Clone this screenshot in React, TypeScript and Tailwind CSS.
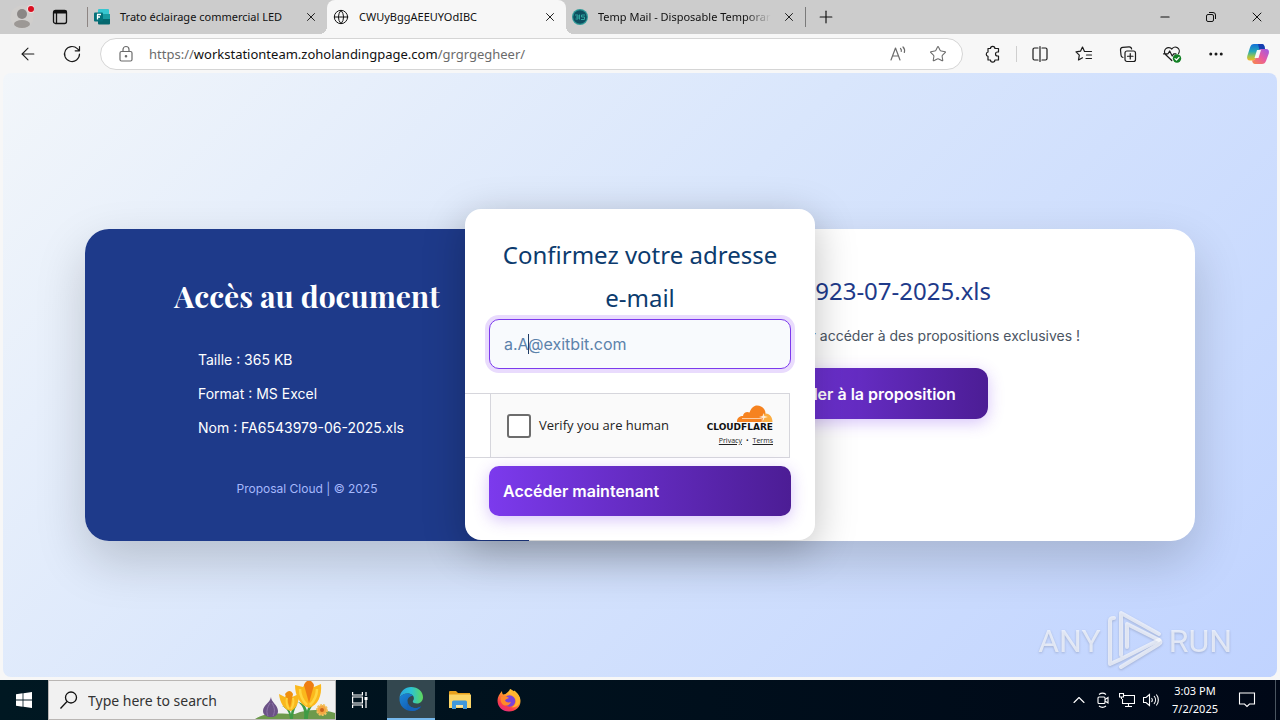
import { useState } from 'react';
import type { ReactNode } from 'react';
import { ArrowLeft, Globe, Minus, Plus, X, ChevronUp, Star, Ellipsis } from 'lucide-react';

function FormsIcon() {
    return (
        <svg viewBox="0 0 16 16" className="w-4 h-4 shrink-0">
            <path d="M5 0h9a1 1 0 0 1 1 1v4H4V1a1 1 0 0 1 1-1z" fill="#37c6d0" />
            <path d="M4 5h12v5H4z" fill="#1a9ba1" />
            <path d="M4 10h12v4.500a1 1 0 0 1-1 1H5a1 1 0 0 1-1-1z" fill="#05686f" />
            <rect x="0" y="3.500" width="9" height="9" rx="1" fill="#04717a" />
            <path d="M3 5.500h4M3 8h3M3.500 5.500v5" stroke="#fff" strokeWidth="1.300" fill="none" />
        </svg>
    );
}

function TempMailIcon() {
    return (
        <svg viewBox="0 0 16 16" className="w-4 h-4 shrink-0">
            <circle cx="8" cy="8" r="8" fill="#2f9a98" />
            <circle cx="8" cy="8" r="6.800" fill="#0d4f60" />
            <path d="M3 6h3v4H3.500M6 8H4M7.500 5.500v5M13 6H9.500v2h3v2.500H9" stroke="#2fa7a0" fill="none" />
        </svg>
    );
}

function ProfileIcon() {
    return (
        <svg viewBox="0 0 24 24" className="w-6 h-6">
            <circle cx="12" cy="12" r="11.500" fill="#d0cecc" />
            <circle cx="12" cy="9" r="5" fill="#8b8785" />
            <ellipse cx="12" cy="19" rx="8" ry="4" fill="#9c9895" />
            <circle cx="21" cy="4" r="4" fill="#f3dcdc" />
            <circle cx="21" cy="4" r="3" fill="#d90f20" />
        </svg>
    );
}

function CopilotIcon() {
    return (
        <svg viewBox="0 0 24 24" className="w-6 h-6">
            <defs>
                <linearGradient id="cpA" x1="0" y1="0" x2="0" y2="1">
                    <stop offset="0" stopColor="#1470d8" />
                    <stop offset=".45" stopColor="#25a8b8" />
                    <stop offset=".75" stopColor="#9ac64c" />
                    <stop offset="1" stopColor="#f5b62a" />
                </linearGradient>
                <linearGradient id="cpB" x1="1" y1="0" x2="0" y2="1">
                    <stop offset="0" stopColor="#9a5be8" />
                    <stop offset=".5" stopColor="#e85aa0" />
                    <stop offset="1" stopColor="#f98a45" />
                </linearGradient>
            </defs>
            <path d="M8 2h8c1.500 0 2 1 2.500 2.500L19 7h-3c-2 0-3 1-3.500 2.500L10 16c-.6 1.600-1.500 2.500-3.500 2.500H4c-2.500 0-3.400-2-2.700-4.500l2.700-8.500C4.700 3 6 2 8 2z" fill="url(#cpA)" />
            <path d="M12 2h4c1.500 0 2 1 2.500 2.500L19 7h-3c-1 0-2 .3-2.500 1z" fill="#173eb0" />
            <path d="M16 22H9c-1.500 0-2.300-1-2.700-2.500L6 18.500c2 0 3.200-.8 3.800-2.500l2.300-6.500C12.700 7.800 13.800 7 16 7h4c2.500 0 3.500 2 2.800 4.500l-2.600 7C19.400 21 18 22 16 22z" fill="url(#cpB)" />
            <path d="M11 8h4l-2.500 8H8.500z" fill="#f7f7f7" />
        </svg>
    );
}

function ToolIcon({ children }: { children: ReactNode }) {
    return (
        <svg viewBox="0 0 20 20" className="w-5 h-5" fill="none" stroke="currentColor" strokeWidth="1.200" strokeLinejoin="round" strokeLinecap="round">
            {children}
        </svg>
    );
}

function ToolButton({ label, children }: { label: string; children: ReactNode }) {
    return (
        <button aria-label={label} className="w-11 h-8 flex items-center justify-center text-[#1b1b1b]">
            {children}
        </button>
    );
}

interface TabProps {
    title: string;
    icon: ReactNode;
    active?: boolean;
    faded?: boolean;
}

function Tab({ title, icon, active, faded }: TabProps) {
    return (
        <div className={`relative w-[239px] h-full flex items-center pl-1.5 pr-2 ${active ? 'bg-[#f7f7f7] rounded-t-lg' : ''}`}>
            {active && (
                <>
                    <span className="absolute -left-2 bottom-0 w-2 h-2 bg-[radial-gradient(circle_at_0_0,#cccccc_8px,#f7f7f7_8px)]" />
                    <span className="absolute -right-2 bottom-0 w-2 h-2 bg-[radial-gradient(circle_at_100%_0,#cccccc_8px,#f7f7f7_8px)]" />
                </>
            )}
            {icon}
            <span className={`ml-2.5 text-[11px] whitespace-nowrap ${faded ? 'mask-r-from-85%' : ''}`}>{title}</span>
            <button aria-label="Close tab" className="ml-auto w-4 h-4 flex items-center justify-center">
                <X className="w-3.5 h-3.5" strokeWidth={1.6} />
            </button>
        </div>
    );
}

function TabStrip() {
    return (
        <div className="h-[34px] shrink-0 flex items-center bg-[#cccccc] text-[#111]">
            <button aria-label="Profile" className="w-11 flex justify-center"><ProfileIcon /></button>
            <button aria-label="Tab actions" className="w-8 flex justify-center">
                <svg viewBox="0 0 16 16" className="w-4 h-4" fill="none" stroke="#111" strokeWidth="1.300">
                    <rect x="1.500" y="1.500" width="13" height="13" rx="2" />
                    <path d="M1.500 3h13" strokeWidth="3" />
                    <path d="M4.500 4v10" />
                </svg>
            </button>
            <span className="w-px h-5 ml-[11px] bg-[#8d8583]" />
            <Tab title="Trato éclairage commercial LED" icon={<FormsIcon />} />
            <Tab title="CWUyBggAEEUYOdIBC" icon={<Globe className="w-4 h-4 shrink-0" strokeWidth={1.5} />} active />
            <Tab title="Temp Mail - Disposable Temporar" icon={<TempMailIcon />} faded />
            <span className="w-px h-5 bg-[#7a7a7a]" />
            <button aria-label="New tab" className="w-10 flex justify-center"><Plus className="w-5 h-5" strokeWidth={1.4} /></button>
            <div className="ml-auto flex items-center">
                <button aria-label="Minimize" className="w-[46px] flex justify-center"><Minus className="w-3.5 h-3.5" strokeWidth={2} /></button>
                <button aria-label="Restore" className="w-[46px] flex justify-center">
                    <svg viewBox="0 0 12 12" className="w-3 h-3" fill="none" stroke="#111">
                        <rect x="1.500" y="3.500" width="7" height="7" rx="1.500" />
                        <path d="M4 1.500h4a2.500 2.500 0 0 1 2.500 2.500v4" />
                    </svg>
                </button>
                <button aria-label="Close" className="w-[46px] flex justify-center"><X className="w-4 h-4" strokeWidth={1.5} /></button>
            </div>
        </div>
    );
}

function Toolbar() {
    return (
        <div className="h-[39px] shrink-0 flex items-center pl-1.5 pr-0.5 bg-[#f7f7f7]">
            <ToolButton label="Back"><ArrowLeft className="w-5 h-5" strokeWidth={1.3} /></ToolButton>
            <ToolButton label="Refresh">
                <ToolIcon>
                    <path d="M17.500 10a7.500 7.500 0 1 1-2.200-5.300l2 2M17.500 2.500v4.300h-4.300" />
                </ToolIcon>
            </ToolButton>
            <div className="ml-1.5 mr-2 flex-1 h-8 flex items-center pl-4 pr-3 rounded-full border border-[#d5d5d5] bg-white text-[#6b6b6b]">
                <svg viewBox="0 0 18 18" className="w-[18px] h-[18px] shrink-0" fill="none" stroke="currentColor" strokeWidth="1.200">
                    <rect x="3" y="6.500" width="12" height="9.500" rx="1.500" />
                    <path d="M6 6.500V4.500a3 3 0 0 1 6 0v2" />
                    <circle cx="9" cy="11.200" r=".7" fill="currentColor" />
                </svg>
                <span className="ml-3.5 flex-1 text-[13px] leading-5 whitespace-nowrap">
                    https://<span className="text-[#111]">workstationteam.zoholandingpage.com</span>/grgrgegheer/
                </span>
                <button aria-label="Read aloud" className="w-10 flex justify-center">
                    <ToolIcon>
                        <path d="M3 16l4.500-12L12 16M4.500 12h6M12.500 4.500c.8.800 1 2 .8 3M15 3c1.500 1.500 1.900 3.700 1.300 5.500" />
                    </ToolIcon>
                </button>
                <button aria-label="Favorite" className="w-10 -mr-2 flex justify-center"><Star className="w-[18px] h-[18px]" strokeWidth={1.4} /></button>
            </div>
            <ToolButton label="Extensions">
                <ToolIcon>
                    <path d="M5 4.500h2.500a2.200 2.200 0 0 1 4.400 0H15.500V8h-1a2 2 0 0 0 0 4h1v4h-3.600a2.200 2.200 0 0 1-4.400 0H5v-3.700a2.200 2.200 0 0 1 0-4.300z" />
                </ToolIcon>
            </ToolButton>
            <span className="w-px h-4 mx-px bg-[#cfcfcf]" />
            <ToolButton label="Split screen">
                <ToolIcon>
                    <path d="M8 4H4.500A1.500 1.500 0 0 0 3 5.500v9A1.500 1.500 0 0 0 4.500 16H8M12 4h3.500A1.500 1.500 0 0 1 17 5.500v9a1.500 1.500 0 0 1-1.500 1.500H12M10 2.500v15" />
                </ToolIcon>
            </ToolButton>
            <ToolButton label="Favorites">
                <ToolIcon>
                    <path d="M10.500 7.500L8.500 3 6.500 7.200 2 7.800l3.300 3.300-.8 4.900 4-2.200M10.500 7.500H17.500M12.500 11h5M12 14.500h5.500" />
                </ToolIcon>
            </ToolButton>
            <ToolButton label="Collections">
                <ToolIcon>
                    <path d="M5 13.500A2.500 2.500 0 0 1 3 11L2.500 6A2.500 2.500 0 0 1 4.700 3.400L11 2.800A2.500 2.500 0 0 1 13.600 5" />
                    <rect x="7" y="7" width="10.500" height="10.500" rx="2" />
                    <path d="M12.250 9.500v5.500M9.500 12.250h5.500" />
                </ToolIcon>
            </ToolButton>
            <ToolButton label="Browser essentials">
                <ToolIcon>
                    <path d="M9.800 16.500L3.500 10.500A4 4 0 0 1 9.800 5a4 4 0 0 1 6.800 4.500M1.500 9.800H6l1.700-2.800 2.500 5 1.500-2.200H14" />
                    <circle cx="15" cy="14.500" r="4.200" fill="#128024" stroke="none" />
                    <path d="M13 14.600l1.500 1.400 2.500-2.700" stroke="#fff" />
                </ToolIcon>
            </ToolButton>
            <ToolButton label="Settings and more"><Ellipsis className="w-[18px] h-[18px]" strokeWidth={2} /></ToolButton>
            <button aria-label="Copilot" className="w-10 flex justify-center"><CopilotIcon /></button>
        </div>
    );
}

function DocumentCard() {
    return (
        <div className="w-full max-w-[1110px] flex min-h-[312px] rounded-3xl overflow-hidden bg-white shadow-[0_20px_50px_rgba(0,0,0,0.18)]">
            <section className="w-2/5 flex flex-col items-center pt-12 pb-[42px] bg-[#1e3a8a] text-white">
                <h1 className="font-['Playfair_Display','Liberation_Serif',serif] text-[30px] leading-[38px] font-bold">Accès au document</h1>
                <ul className="mt-7 w-[218px] text-[14px] leading-[34px] whitespace-nowrap">
                    <li>Taille : 365 KB</li>
                    <li>Format : MS Excel</li>
                    <li>Nom : FA6543979-06-2025.xls</li>
                </ul>
                <p className="mt-auto text-[12px] leading-5 text-[#a5b8fc]">Proposal Cloud | © 2025</p>
            </section>
            <section className="flex-1 flex flex-col items-center pt-10">
                <h2 className="font-['Noto_Sans',sans-serif] text-[24px] leading-[44px] text-[#1e3a8a]">FA6543923-07-2025.xls</h2>
                <p className="mt-[11px] text-[14px] leading-6 text-[#4b5563]">Confirmez votre mail pour accéder à des propositions exclusives !</p>
                <button className="mt-5 h-[51px] px-8 rounded-xl bg-linear-to-r from-[#7c3aed] to-[#4c1d95] text-[16px] font-semibold text-white shadow-[0_4px_16px_rgba(124,58,237,0.3)]">
                    Accéder à la proposition
                </button>
            </section>
        </div>
    );
}

function CloudflareLogo() {
    return (
        <div className="flex flex-col items-end">
            <svg viewBox="0 0 36 17" className="w-9 h-[17px]">
                <path d="M0 17c-.3-4 2.500-6 6-6 .3-3.500 4-5 6.500-3.500C14.500 2.500 17 .5 20 .5c5 0 8.500 3.500 8.500 8L27 17z" fill="#f6821f" />
                <path d="M26 17c1-3 1-4.500-1-5l3-3.500c4.500-.5 7.500 3.500 7.500 8.500z" fill="#fbad41" />
                <path d="M5 13.500h19c1.500 0 1.500 1.500 1 3.500" stroke="#fff" strokeWidth=".6" fill="none" />
                <path d="M26.500 8l.8 3 3.700 1-3.700 1-.8 3-1-3-3.500-1 3.500-1z" fill="#fff" opacity=".8" />
            </svg>
            <span className="font-['DejaVu_Sans',sans-serif] text-[9px] leading-[10px] font-bold text-[#111]">CLOUDFLARE</span>
            <div className="mt-1 flex items-center gap-1 font-['Open_Sans',sans-serif] text-[7px] leading-[10px] text-[#232323]">
                <a href="#privacy" className="underline">Privacy</a>
                <span>•</span>
                <a href="#terms" className="underline">Terms</a>
            </div>
        </div>
    );
}

function ConfirmDialog() {
    const [email, setEmail] = useState('a.A@exitbit.com');

    return (
        <div className="absolute inset-0 pb-px flex items-center justify-center">
            <form
                onSubmit={e => e.preventDefault()}
                className="w-[350px] py-6 rounded-2xl bg-white shadow-[0_10px_40px_rgba(0,0,0,0.25)]"
            >
                <label htmlFor="email" className="block px-6 text-center font-['Noto_Sans',sans-serif] text-[24px] leading-[43px] text-[#0c3b6e]">
                    Confirmez votre adresse <span className="whitespace-nowrap">e-mail</span>
                </label>
                <div className="relative mx-6">
                    <input
                        id="email"
                        type="email"
                        value={email}
                        onChange={e => setEmail(e.target.value)}
                        className="block w-full h-[50px] px-3.5 rounded-[10px] border border-[#7c3aed] bg-[#f8fafd] text-[16px] text-[#5c82ab] ring-4 ring-[#e9dbfd] outline-none"
                    />
                    {/* Text caret */}
                    <span className="absolute left-[39px] top-[15px] w-px h-5 bg-[#1f3c66]" />
                </div>

                <div className="mt-6 mr-[25px] pl-[25px] border-y border-[#d6d6dc]">
                    <div className="h-[63px] flex items-center justify-between px-4 border-x border-[#d6d6dc] bg-[#fafafa]">
                        <label className="flex items-center gap-2 font-['Open_Sans',sans-serif] text-[13px] text-[#232323]">
                            <input type="checkbox" className="appearance-none w-6 h-6 rounded-[3px] border-2 border-[#6d6d6d] bg-white" />
                            Verify you are human
                        </label>
                        <CloudflareLogo />
                    </div>
                </div>

                <div className="mt-2 mx-6">
                    <button className="w-full h-[50px] px-3.5 rounded-[10px] bg-linear-to-r from-[#7c3aed] to-[#4c1d95] text-left text-[16px] font-semibold text-white shadow-[0_4px_16px_rgba(124,58,237,0.3)]">
                        Accéder maintenant
                    </button>
                </div>
            </form>
        </div>
    );
}

function Watermark() {
    return (
        <div className="absolute right-[45px] bottom-1 flex items-center text-white/65 font-['Liberation_Sans_Narrow','Roboto',sans-serif] text-[32px] leading-none drop-shadow-[0_1px_1px_rgba(90,100,130,0.5)]">
            <span>ANY</span>
            <svg viewBox="0 0 58 64" className="ml-1.5 mr-1 w-[58px] h-16" fill="none" stroke="currentColor" strokeWidth="4" strokeLinejoin="round" strokeLinecap="round">
                <path d="M7 9C4 9 3 10 3 12v43l9-4 40-20" />
                <path d="M14 46V4l38 21" />
                <path d="M20 38V15l32 16c2 1 2 3 0 4L14 58" />
            </svg>
            <span>RUN</span>
        </div>
    );
}

function Flowers() {
    return (
        <svg viewBox="0 0 80 38" className="w-20 h-[38px] self-end">
            <path d="M0 38c12-8 28-5 40-5 14-6 30-4 40-1v6z" fill="#6d9a4c" />
            <path d="M35 38c-1-8-3-10-8-13 6 1 8 4 9 8 0-4 2-7 6-9-3 5-4 9-4 14zM49 38c1-9-1-13-6-17 5 1 8 4 9 9 1-5 4-8 9-9-5 5-8 9-8 17z" fill="#3f9b45" />
            <path d="M16 16c0 5 7 8 7 14 0 4-3 6-7 6s-8-2-8-6c0-6 7-8 8-14z" fill="#6b5286" />
            <path d="M15 22c-3 5-4 9-2 13M17 22c3 5 3 9 1 13" stroke="#8f75ab" fill="none" />
            <path d="M24 13l6 3 3-5 4 5 7-3c0 8-2 14-8 17-7-1-11-8-12-17z" fill="#f9b81c" />
            <path d="M30 13c3-4 6-4 8 0l-3 14z" fill="#ef8f0e" />
            <path d="M32 17c-1 4 0 8 2 11M38 17c1 4 0 8-2 11" stroke="#ffd23c" strokeWidth="2" fill="none" />
            <path d="M40 4l8 2 3-5 4 0 4 5 7-3c1 12-3 21-12 24C45 24 40 15 40 4z" fill="#fbb81c" />
            <path d="M49 4c3-6 7-6 10 0l-5 18z" fill="#ee7d12" />
            <path d="M45 8c0 7 3 12 7 16M62 8c0 7-3 12-7 16" stroke="#ffd640" strokeWidth="2.500" fill="none" />
            <circle cx="67" cy="29" r="5" fill="#f5a742" stroke="#f2c25c" strokeWidth="2" strokeDasharray="2 1" />
            <circle cx="67" cy="29" r="2" fill="#c7621b" />
        </svg>
    );
}

function EdgeIcon() {
    return (
        <svg viewBox="0 0 24 24" className="w-6 h-6">
            <defs>
                <linearGradient id="edgeTop" x1="0" y1="0.500" x2="1" y2="0.500">
                    <stop offset="0" stopColor="#2aa5e0" />
                    <stop offset=".5" stopColor="#2cc3d2" />
                    <stop offset="1" stopColor="#5fd85a" />
                </linearGradient>
                <linearGradient id="edgeLow" x1="0" y1="0" x2="1" y2="1">
                    <stop offset="0" stopColor="#1b86d8" />
                    <stop offset="1" stopColor="#0f4fa6" />
                </linearGradient>
            </defs>
            <path d="M0.500 11C1 4.500 6 0 12.200 0 19 0 24 4.600 24 10.200c0 3.600-2.600 6.300-6 6.300-2.700 0-4.200-1-4.200-2 0-.8 1.100-1.300 1.100-3.200C14.900 8.500 12 6.500 8.500 6.500 5 6.500 2 8 .5 11z" fill="url(#edgeTop)" />
            <path d="M0.500 11C2 8 5 6.500 8.500 6.500c2.500 0 4.500 1 5.500 2.500-3-.5-5.500 2-5.500 5 0 4.500 4 7 8 7 2 0 4-.7 5-1.500.5-.3.800 0 .5.500C20 22.500 16.500 24 12.500 24 5.500 24 0 18.500 0.500 11z" fill="url(#edgeLow)" />
            <path d="M8.500 14c0 4.500 4 7 8 7 2 0 4-.7 5-1.500-2 3.500-6 4.700-9 4.500-4-1-5.500-6-4-10z" fill="#1663b8" />
        </svg>
    );
}

function ExplorerIcon() {
    return (
        <svg viewBox="0 0 22 20" className="w-[22px] h-5">
            <path d="M0 2a1 1 0 0 1 1-1h6l2 2h12v4H0z" fill="#e8a11c" />
            <path d="M0 4.500h22V18H0z" fill="#fbd567" />
            <path d="M3 19v-7a1.500 1.500 0 0 1 1.500-1.500h12A1.500 1.500 0 0 1 18 12v7h-4v-4H7v4z" fill="#3f98dc" />
            <path d="M7 15h7v2H7z" fill="#f7e3a3" />
        </svg>
    );
}

function FirefoxIcon() {
    return (
        <svg viewBox="0 0 24 24" className="w-6 h-6">
            <defs>
                <linearGradient id="ff" x1=".8" y1="0" x2=".2" y2="1">
                    <stop offset="0" stopColor="#ffe545" />
                    <stop offset=".4" stopColor="#ff9a2a" />
                    <stop offset=".75" stopColor="#fb3c4b" />
                    <stop offset="1" stopColor="#e0288f" />
                </linearGradient>
            </defs>
            <path d="M5 3c0 1.500.3 2.500 1 3.500L8.500 6C10 4.500 12 4 13 1c1 .3 2.500 1.500 3.500 3l1-1.500C20 5 23.500 8 23.500 13c0 6-5 10.500-11.500 10.500S.5 19 .5 12.500C.5 9 2.500 6 5 3z" fill="url(#ff)" />
            <circle cx="12.500" cy="13" r="5.800" fill="#7a43d8" />
            <path d="M4 9c3-1.500 6-1 8 1-1.500 1-3 1-4 2.500 1 2 4 2.500 6 1.500-1.500 4-7 5-9.500 1C3.500 13 3.500 11 4 9z" fill="#ff8a2a" />
            <path d="M13 1c1 5 5.500 5.500 6 11 .3 4-2 6.500-4.500 7 5 1 8.500-2.500 8.500-7.500C22.500 6.500 18 3.500 13 1z" fill="#ffb52e" />
        </svg>
    );
}

function Taskbar() {
    return (
        <div className="h-10 shrink-0 flex items-center bg-linear-to-r from-[#001822] to-[#000817] text-white">
            <button aria-label="Start" className="w-12 flex justify-center">
                <svg viewBox="0 0 16 16" className="w-4 h-4" fill="#fff">
                    <path d="M0 2.200L6.600 1.300v6.300H0zM7.400 1.200L16 0v7.600H7.400zM0 8.400h6.600v6.300L0 13.800zM7.400 8.400H16V16l-8.600-1.200z" />
                </svg>
            </button>
            <div className="w-[288px] h-full pl-[11px] flex items-center bg-[#f1f1f1] border border-[#b9b6b4]">
                <svg viewBox="0 0 18 18" className="w-[18px] h-[18px] shrink-0" fill="none" stroke="#111" strokeWidth="1.300">
                    <circle cx="11" cy="6.500" r="5.500" />
                    <path d="M7 10.500L.5 17.500" />
                </svg>
                <input aria-label="Search" placeholder="Type here to search" className="ml-2.5 flex-1 min-w-0 text-[14px] placeholder:text-[#333] outline-none" />
                <Flowers />
            </div>
            <button aria-label="Task view" className="w-12 flex justify-center">
                <svg viewBox="0 0 16 16" className="w-4 h-4" fill="none" stroke="#fff" strokeWidth="1.200">
                    <path d="M.6 0v3h9.800V0M.6 16v-3h9.800v3M.6 5h9.800v6H.6zM14 0v4M14 8v8" />
                    <path d="M12.500 5h3v3h-3z" fill="#fff" stroke="none" />
                </svg>
            </button>
            <button aria-label="Microsoft Edge" className="ml-[3px] w-12 h-full flex items-center justify-center bg-[#33474f] border-b-2 border-[#76b9ed]"><EdgeIcon /></button>
            <button aria-label="File Explorer" className="w-[49px] flex justify-center"><ExplorerIcon /></button>
            <button aria-label="Firefox" className="w-[49px] flex justify-center"><FirefoxIcon /></button>

            <div className="ml-auto h-full flex items-center">
                <button aria-label="Show hidden icons" className="w-6 flex justify-center"><ChevronUp className="w-5 h-5" strokeWidth={1.3} /></button>
                <svg viewBox="0 0 16 16" className="mx-1 w-4 h-4" fill="none" stroke="#fff" strokeWidth="1.100">
                    <rect x="3" y="5" width="7" height="6.500" rx="1" />
                    <path d="M10 7.500l3-2v5.500l-3-2M4 2.500c2-1.500 5-1.500 7 0M4 14c2 1.500 5 1.500 7 0" />
                </svg>
                <svg viewBox="0 0 16 16" className="mx-1 w-4 h-4" fill="none" stroke="#fff" strokeWidth="1.100">
                    <path d="M5 3.500h10.500v8H3.500V7M9.500 11.500v3M6 14.500h7M.5 1.500h4v3.500h-4zM2.500 5v2" />
                </svg>
                <svg viewBox="0 0 16 16" className="mx-1 w-4 h-4" fill="none" stroke="#fff" strokeWidth="1.100">
                    <path d="M.5 5.500h2.500l3.500-3v11l-3.500-3H.5zM8.500 6c1 1.200 1 2.800 0 4M11 4c2 2.300 2 5.700 0 8M13.300 2.500c2.700 3 2.700 8 0 11" />
                </svg>
                <div className="w-16 text-center text-[11px] leading-[18px]">
                    <div>3:03 PM</div>
                    <div>7/2/2025</div>
                </div>
                <button aria-label="Notifications" className="w-10 flex justify-center">
                    <svg viewBox="0 0 18 18" className="w-[18px] h-[18px]" fill="none" stroke="#fff" strokeWidth="1.100">
                        <path d="M1.500 2h15v11h-5L9 15.500 6.500 13h-5z" />
                    </svg>
                </button>
                <span className="ml-2 mr-1 w-px h-full bg-[#4a5560]" />
            </div>
        </div>
    );
}

export default function App() {
    return (
        <div className="h-screen flex flex-col bg-[#f7f7f7] font-['Noto_Sans',sans-serif]">
            <TabStrip />
            <Toolbar />
            <main className="relative flex-1 mx-[3px] mb-[3px] flex items-center justify-center px-5 pt-5 rounded-lg overflow-hidden bg-linear-135 from-[#f2f6fa] via-[#d9e6fc] via-45% to-[#c0d3ff] font-['Inter',sans-serif]">
                <DocumentCard />
                <ConfirmDialog />
                <Watermark />
            </main>
            <Taskbar />
        </div>
    );
}
